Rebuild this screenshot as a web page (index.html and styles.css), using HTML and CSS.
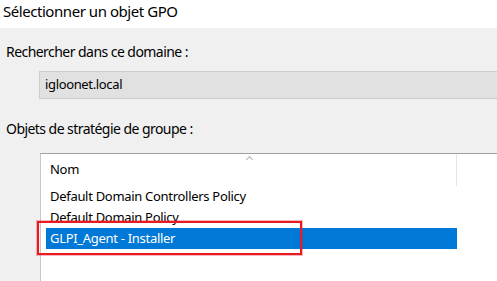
FILE: index.html
```html
<!DOCTYPE html>
<html>
<head>
    <title>Sélectionner un objet GPO</title>
    <link rel="stylesheet" href="styles.css">
</head>
<body>

<div class="title">Sélectionner un objet GPO</div>

<div class="dialog">
    <div class="label">Rechercher dans ce domaine :</div>
    <div class="domain">igloonet.local</div>

    <div class="label label-gpo">Objets de stratégie de groupe :</div>
    <div class="list">
        <div class="list-header">
            <div class="col">Nom<span class="sort"></span></div>
        </div>
        <div class="row">Default Domain Controllers Policy</div>
        <div class="row">Default Domain Policy</div>
        <div class="row selected">GLPI_Agent - Installer<span class="mark"></span></div>
    </div>
</div>

</body>
</html>
```

FILE: styles.css
```css
html, body { margin: 0; padding: 0; height: 100%; }
body { display: flex; flex-direction: column; background: #f0f0f0; font-family: "Noto Sans", "Open Sans", sans-serif; font-size: 14px; color: #000; overflow: hidden; }

.title { flex: none; height: 28px; background: #fff; font-size: 15px; letter-spacing: -0.45px; padding-left: 3px; box-sizing: border-box; line-height: 23px; }

.dialog { flex: 1; display: flex; flex-direction: column; padding-top: 14px; }
.label { padding-left: 6px; line-height: 19px; height: 19px; letter-spacing: -0.55px; }
.label-gpo { margin-top: 20px; }

.domain { margin: 10px 0 0 39px; height: 28px; box-sizing: border-box; border: 1px solid #cccccc; border-right: none; background: #e1e1e1; padding-left: 5px; font-size: 13px; letter-spacing: -0.35px; line-height: 25px; }

.list { flex: 1; margin: 15px 0 0 40px; background: #fff; border-top: 1px solid #a0a0a0; border-left: 1px solid #c8c8c8; font-size: 13px; letter-spacing: -0.3px; }
.list-header { display: flex; height: 32px; }
.list-header .col { position: relative; width: 411px; margin-left: 5px; padding-left: 4px; box-sizing: border-box; line-height: 31px; border-right: 1px solid #e5e5e5; }
.list-header .sort { position: absolute; left: 201px; top: 3px; width: 4px; height: 4px; border-top: 1px solid #b0b0b0; border-left: 1px solid #b0b0b0; transform: rotate(45deg); }

.row { position: relative; width: 411px; margin-left: 5px; padding-left: 4px; box-sizing: border-box; height: 21px; line-height: 21px; white-space: nowrap; }
.row.selected { background: #0078d7; color: #fff; }
.row .mark { position: absolute; left: -9px; top: -7px; width: 265px; height: 34px; box-sizing: border-box; border: 2px solid #e81b23; box-shadow: 0 0 0 1px rgba(232, 27, 35, 0.3); }
```
